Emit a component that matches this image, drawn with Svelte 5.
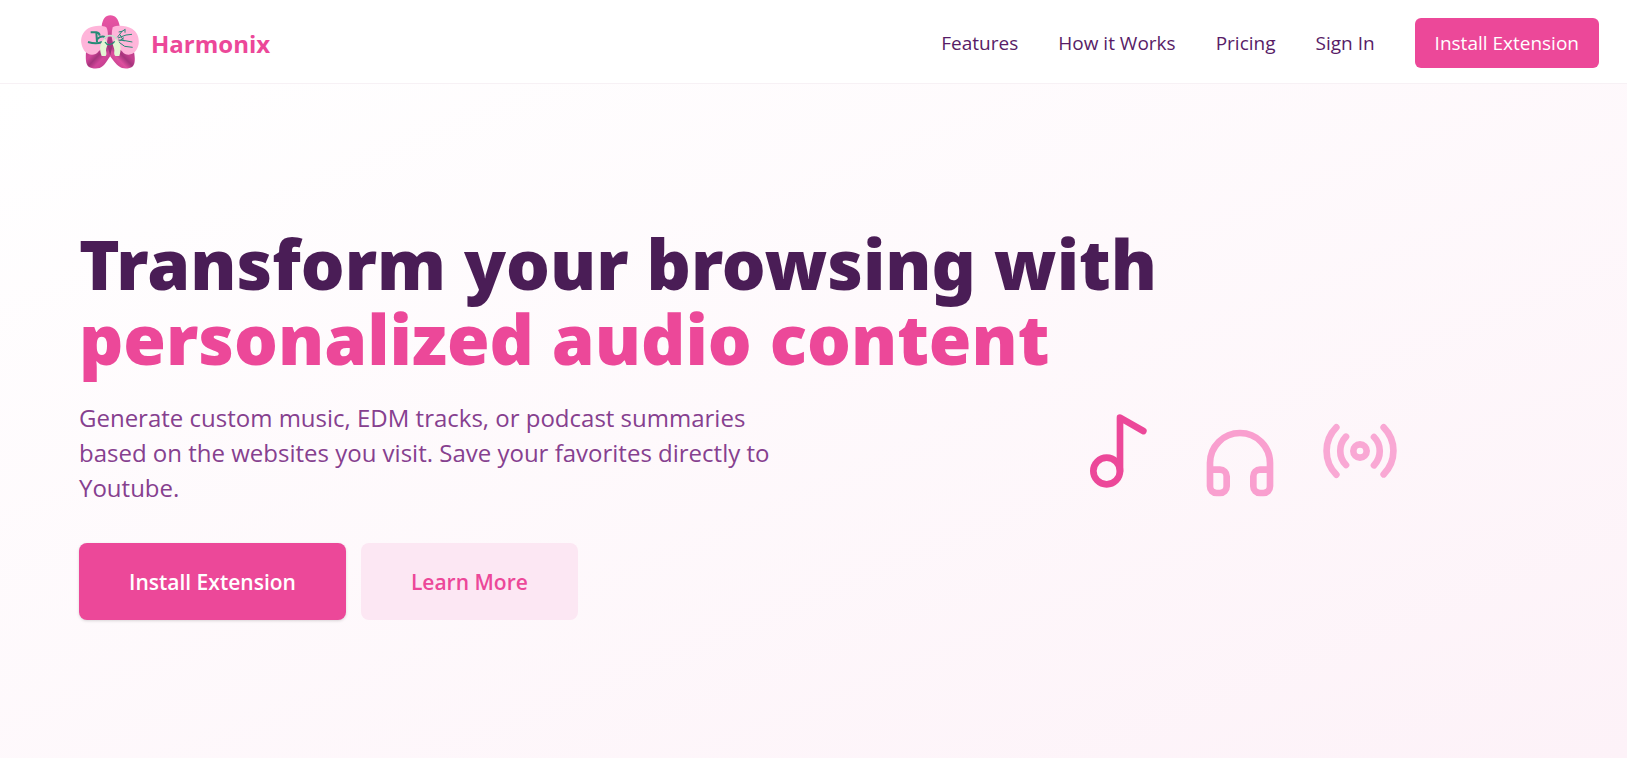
<script>
  const links = [
    { label: 'Features', href: '#features' },
    { label: 'How it Works', href: '#how-it-works' },
    { label: 'Pricing', href: '#pricing' },
    { label: 'Sign In', href: '#sign-in' },
  ];
</script>

<div class="page">
  <header>
    <a class="brand" href="#home">
      <svg class="logo" viewBox="27 29 180 165" aria-hidden="true">
        <defs>
          <linearGradient id="crown" x1="0" y1="0" x2="0" y2="1">
            <stop offset="0" stop-color="#e955a4" />
            <stop offset="0.35" stop-color="#dd4f9e" />
            <stop offset="0.7" stop-color="#a83480" />
            <stop offset="1" stop-color="#8f2f6e" />
          </linearGradient>
          <linearGradient id="petal-left" x1="0" y1="0" x2="1" y2="1">
            <stop offset="0" stop-color="#b53c88" />
            <stop offset="0.35" stop-color="#d2479a" />
            <stop offset="0.5" stop-color="#a5347c" />
            <stop offset="0.65" stop-color="#d2479a" />
            <stop offset="1" stop-color="#b93a86" />
          </linearGradient>
          <linearGradient id="petal-right" x1="1" y1="0" x2="0" y2="1">
            <stop offset="0" stop-color="#b53c88" />
            <stop offset="0.35" stop-color="#c6418f" />
            <stop offset="0.5" stop-color="#a5347c" />
            <stop offset="0.65" stop-color="#dd4f9e" />
            <stop offset="1" stop-color="#b93a86" />
          </linearGradient>
        </defs>
        <path fill="url(#crown)" d="M95 62C98 42 106 30 121 30s25 12 28 32l-14 16v72h-28V78Z" />
        <path fill="url(#petal-left)" d="M48 140c20 4 40-12 62-28l11 40c-8 10-16 30-32 36-12 3-26 1-33-4-10-8-9-28-8-44Z" />
        <path fill="url(#petal-right)" d="M192 140c-20 4-40-12-62-28l-10 40c8 10 20 30 36 36 12 3 24 1 31-4 10-8 8-28 5-44Z" />
        <path fill="#ffb5da" d="M109 66c7 12 5 34 1 48-6 12-16 16-24 24-6 8-12 10-20 10-17-1-27-14-31-30-5-18 2-38 20-49 14-8 40-11 54-3Z" />
        <path fill="#ffb5da" d="M128 66c-4 16-4 34 2 48 6 12 18 16 26 24 6 8 12 10 20 10 16-1 26-14 30-32 2-20-4-36-20-46-16-9-44-12-58-4Z" />
        <g fill="none" stroke="#268a76">
          <path stroke-width="6" d="M62 81h17q9 1 10 10M79 82l2 28M54 110q25 8 42 0M82 101q12-12 26-4" />
          <path stroke-width="3" d="M142 96l14-18 10-6M156 78l-10 2M165 72v10M144 98l24-9 18-2M145 104l20 2 22 4M146 110l18 13 24 3M150 88l12 20M148 107l14-10" />
        </g>
        <path fill="none" stroke="#c9dfd0" stroke-width="5" d="M102 104q3-13 18-13t20 13" />
        <path fill="#e3f6d3" d="M104 101c-13 8-18 29-9 51h12c4-5 2-10 1-17 0-8 5-13 5-21Z" />
        <path fill="#e3f6d3" d="M137 101c15 8 19 29 11 51h-12c-5-5-3-10-3-17 0-8-5-13-5-21Z" />
        <path fill="#a63580" d="M120 94q10 8 0 22-11-12 0-22Z" />
        <path fill="none" stroke="#268a76" stroke-width="4" d="M105 110q5 9 14 8t15-10" />
      </svg>
      <span>Harmonix</span>
    </a>
    <nav>
      {#each links as link}
        <a href={link.href}>{link.label}</a>
      {/each}
      <button class="btn btn-primary btn-small" type="button">Install Extension</button>
    </nav>
  </header>

  <main>
    <h1>
      Transform your browsing with
      <span class="accent">personalized audio content</span>
    </h1>
    <div class="columns">
      <div class="intro">
        <p>
          Generate custom music, EDM tracks, or podcast summaries based on the websites you visit.
          Save your favorites directly to Youtube.
        </p>
        <div class="actions">
          <button class="btn btn-primary btn-large" type="button">Install Extension</button>
          <button class="btn btn-soft btn-large" type="button">Learn More</button>
        </div>
      </div>
      <div class="icons" aria-hidden="true">
        <svg class="icon music" viewBox="0 0 24 24">
          <circle cx="8" cy="18" r="4" />
          <path d="M12 18V2l7 4" />
        </svg>
        <svg class="icon headphones" viewBox="0 0 24 24">
          <path d="M3 14h3a2 2 0 0 1 2 2v3a2 2 0 0 1-2 2H5a2 2 0 0 1-2-2v-7a9 9 0 0 1 18 0v7a2 2 0 0 1-2 2h-1a2 2 0 0 1-2-2v-3a2 2 0 0 1 2-2h3" />
        </svg>
        <svg class="icon radio" viewBox="0 0 24 24">
          <path d="M4.9 19.1C1 15.2 1 8.8 4.9 4.9" />
          <path d="M7.8 16.2c-2.3-2.3-2.3-6.1 0-8.5" />
          <circle cx="12" cy="12" r="2" />
          <path d="M16.2 7.8c2.3 2.3 2.3 6.1 0 8.5" />
          <path d="M19.1 4.9C23 8.8 23 15.1 19.1 19" />
        </svg>
      </div>
    </div>
  </main>
</div>

<style>
  :global(body) {
    margin: 0;
  }
  .page {
    min-height: 100vh;
    display: flex;
    flex-direction: column;
    font-family: 'Segoe UI', 'Open Sans', 'Noto Sans', sans-serif;
    color: #4a1d56;
  }
  header {
    display: flex;
    align-items: center;
    justify-content: space-between;
    padding: 15px 28px 13px 79px;
    background: #fff;
    border-bottom: 1px solid #f7f1f5;
  }
  .brand {
    display: flex;
    align-items: center;
    gap: 12px;
    color: #ec4899;
    font-size: 24px;
    line-height: 32px;
    font-weight: 700;
    text-decoration: none;
  }
  .brand span {
    padding-top: 3px;
  }
  .logo {
    width: 60px;
    height: 55px;
  }
  nav {
    display: flex;
    align-items: center;
    gap: 40px;
    font-size: 19px;
    line-height: 30px;
  }
  nav a {
    color: #581c67;
    text-decoration: none;
  }
  .btn {
    border: 0;
    border-radius: 8px;
    font-family: inherit;
    cursor: pointer;
  }
  .btn-primary {
    background: #ec4899;
    color: #fff;
  }
  .btn-soft {
    background: #fce7f3;
    color: #ec4899;
  }
  .btn-small {
    padding: 10px 20px;
    border-radius: 6px;
    font-size: 19px;
    line-height: 30px;
  }
  .btn-large {
    padding: 22px 50px 20px;
    font-size: 21px;
    line-height: 35px;
    font-weight: 600;
  }
  .btn-large.btn-primary {
    box-shadow: 0 1px 3px rgba(0, 0, 0, 0.15);
  }
  main {
    flex: 1;
    padding: 142px 0 80px 79px;
    background: linear-gradient(to bottom right, #fff, #fdf2f8);
  }
  h1 {
    margin: 0;
    font-family: 'Segoe UI', 'Noto Sans', 'Open Sans', sans-serif;
    font-size: 69px;
    line-height: 75px;
    font-weight: 900;
  }
  .accent {
    display: block;
    color: #ec4899;
  }
  .columns {
    display: grid;
    grid-template-columns: 1fr 1fr;
    margin-top: 24px;
  }
  p {
    max-width: 700px;
    margin: 0;
    color: #86408f;
    font-size: 24px;
    line-height: 35px;
  }
  .actions {
    display: flex;
    gap: 15px;
    margin-top: 38px;
  }
  .icons {
    display: flex;
    align-items: flex-start;
    justify-content: center;
    gap: 40px;
    padding-top: 11px;
  }
  .icon {
    width: 80px;
    height: 80px;
    fill: none;
    stroke: currentColor;
    stroke-width: 2;
    stroke-linecap: round;
    stroke-linejoin: round;
  }
  .music {
    color: #ec4899;
  }
  .headphones {
    margin-top: 12px;
    color: #f99fcf;
  }
  .radio {
    color: #f9a8d4;
  }
</style>
